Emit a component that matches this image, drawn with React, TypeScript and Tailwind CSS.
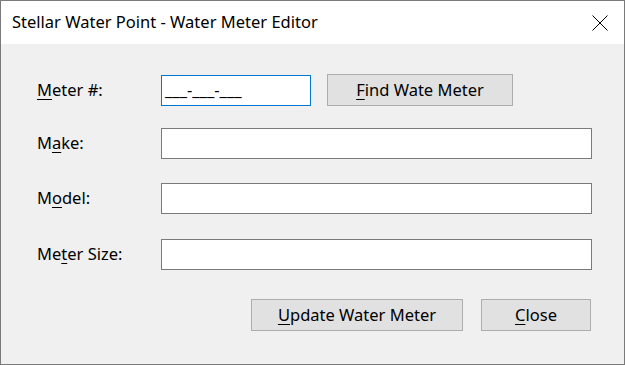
import React from 'react';

function Key({ children }: { children: React.ReactNode }) {
  return <span className="underline underline-offset-[3px] decoration-1">{children}</span>;
}

function Field({ label, className = '' }: { label: React.ReactNode; className?: string }) {
  return (
    <div className={`flex items-center ${className}`}>
      <div className="w-[124px]">{label}</div>
      <div className="w-[431px] h-[31px] bg-white border border-[#7a7a7a]"></div>
    </div>
  );
}

export default function App() {
  return (
    <div
      className="w-[625px] h-[365px] border border-[#7a7a7a] bg-[#f0f0f0] flex flex-col text-black text-[16.5px]"
      style={{ fontFamily: '"Noto Sans", "Open Sans", sans-serif' }}
    >
      {/* Title bar */}
      <div className="h-[43px] bg-white flex items-center justify-between pl-[11px] pr-[16px]">
        <span className="text-[16.5px]">Stellar Water Point - Water Meter Editor</span>
        <svg width="16" height="16" viewBox="0 0 16 16" className="shrink-0">
          <path d="M0.5 0.5L15.5 15.5M15.5 0.5L0.5 15.5" stroke="#000" strokeWidth="1" />
        </svg>
      </div>

      {/* Body */}
      <div className="flex-1 pl-[36px] pt-[30px]">
        <div className="flex items-center h-[32px]">
          <div className="w-[124px]">
            <Key>M</Key>eter #:
          </div>
          <div className="w-[150px] h-[31px] bg-white border border-[#0078d7] flex items-center pl-[3px] mt-[1px]">
            ___-___-___
          </div>
          <button className="ml-[16px] w-[186px] h-[32px] bg-[#e1e1e1] border border-[#adadad]">
            <Key>F</Key>ind Wate Meter
          </button>
        </div>

        <Field className="mt-[22px]" label={<>M<Key>a</Key>ke:</>} />
        <Field className="mt-[24px]" label={<>M<Key>o</Key>del:</>} />
        <Field className="mt-[25px]" label={<>Me<Key>t</Key>er Size:</>} />

        <div className="flex mt-[29px] pl-[214px] gap-[18px]">
          <button className="w-[212px] h-[32px] bg-[#e1e1e1] border border-[#adadad]">
            <Key>U</Key>pdate Water Meter
          </button>
          <button className="w-[110px] h-[32px] bg-[#e1e1e1] border border-[#adadad]">
            <Key>C</Key>lose
          </button>
        </div>
      </div>
    </div>
  );
}
